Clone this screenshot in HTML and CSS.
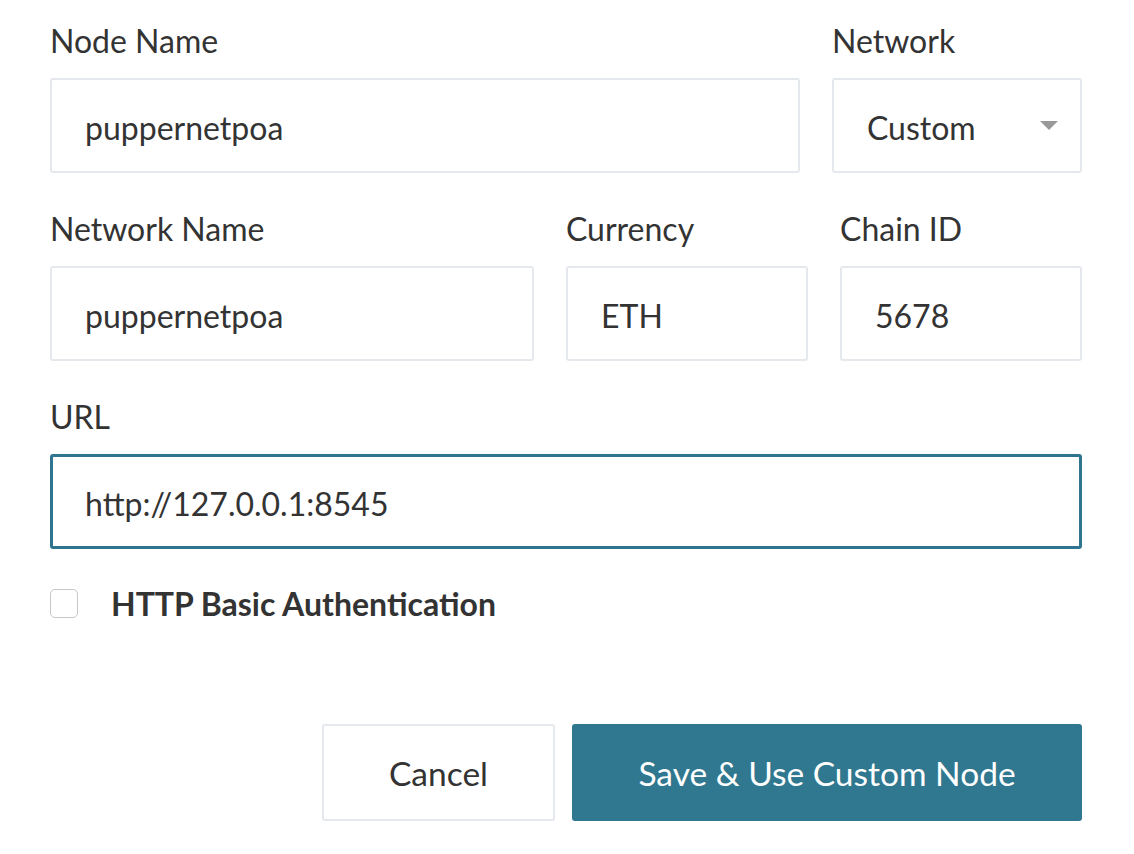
FILE: index.html
```html
<!DOCTYPE html>
<html>
<head>
<meta charset="utf-8">
<link rel="stylesheet" href="styles.css">
</head>
<body>
<form class="form">
  <div class="row row-a">
    <div class="field">
      <label class="label">Node Name</label>
      <div class="input">puppernetpoa</div>
    </div>
    <div class="field">
      <label class="label">Network</label>
      <div class="input select">
        <span>Custom</span>
        <span class="caret"></span>
      </div>
    </div>
  </div>
  <div class="row row-b">
    <div class="field">
      <label class="label">Network Name</label>
      <div class="input">puppernetpoa</div>
    </div>
    <div class="field">
      <label class="label">Currency</label>
      <div class="input">ETH</div>
    </div>
    <div class="field">
      <label class="label">Chain ID</label>
      <div class="input">5678</div>
    </div>
  </div>
  <div class="row">
    <div class="field">
      <label class="label">URL</label>
      <div class="input focused">http://127.0.0.1:8545</div>
    </div>
  </div>
  <div class="check-row">
    <span class="checkbox"></span>
    <span class="check-label">HTTP Basic Authentication</span>
  </div>
  <div class="actions">
    <button type="button" class="btn btn-cancel">Cancel</button>
    <button type="button" class="btn btn-primary">Save &amp; Use Custom Node</button>
  </div>
</form>
</body>
</html>
```

FILE: styles.css
```css
* { box-sizing: border-box; }
html, body {
  margin: 0;
  padding: 0;
  background: #fff;
}
body {
  font-family: Lato, "Open Sans", "Liberation Sans", sans-serif;
  color: #333;
}
.form {
  width: 1032px;
  margin-left: 50px;
  padding-top: 23px;
}
.row {
  display: grid;
  grid-template-columns: 1fr;
  column-gap: 32px;
  margin-bottom: 38px;
}
.row-a { grid-template-columns: 1fr 250px; }
.row-b { grid-template-columns: 484px 1fr 1fr; }
.field {
  display: flex;
  flex-direction: column;
}
.label {
  font-size: 32px;
  line-height: 36px;
  margin-bottom: 19px;
  color: #333;
}
.input {
  height: 95px;
  border: 2px solid #e5e8ec;
  border-radius: 3px;
  padding: 3px 33px 0;
  font-size: 32px;
  display: flex;
  align-items: center;
  color: #333;
}
.focused {
  border: 3px solid #2f7590;
  padding-left: 32px;
}
.select {
  justify-content: space-between;
  padding-right: 22px;
}
.caret {
  width: 0;
  height: 0;
  border-left: 9px solid transparent;
  border-right: 9px solid transparent;
  border-top: 9px solid #999;
  margin-top: -3px;
}
.check-row {
  display: flex;
  align-items: center;
  gap: 33px;
  margin-top: 6px;
  height: 32px;
}
.checkbox {
  width: 28px;
  height: 29px;
  border: 1.5px solid #c8c8c8;
  border-radius: 5px;
  background: #fff;
}
.check-label {
  font-size: 32px;
  font-weight: 700;
  color: #333;
}
.actions {
  display: flex;
  justify-content: flex-end;
  gap: 17px;
  margin-top: 105px;
}
.btn {
  height: 97px;
  font-family: inherit;
  font-size: 33.5px;
  border-radius: 3px;
  cursor: pointer;
}
.btn-cancel {
  width: 233px;
  background: #fff;
  color: #333;
  border: 2px solid #e5e8ec;
}
.btn-primary {
  width: 510px;
  background: #307790;
  color: #fff;
  border: none;
}
```
